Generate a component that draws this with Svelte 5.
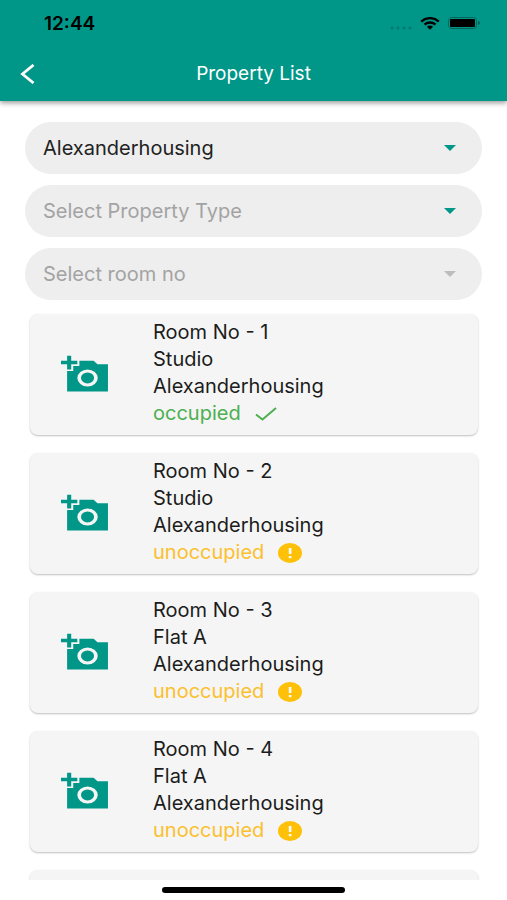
<script>
  let property = $state("Alexanderhousing");
  let propertyType = $state("");
  let roomNo = $state("");

  const rooms = [
    { no: 1, type: "Studio", property: "Alexanderhousing", occupied: true },
    { no: 2, type: "Studio", property: "Alexanderhousing", occupied: false },
    { no: 3, type: "Flat A", property: "Alexanderhousing", occupied: false },
    { no: 4, type: "Flat A", property: "Alexanderhousing", occupied: false },
  ];
</script>

{#snippet arrow()}
  <svg class="arrow" viewBox="0 0 12 6" aria-hidden="true"><path d="M0 0h12L6 6z" /></svg>
{/snippet}

<div class="screen">
  <header>
    <div class="status-bar">
      <span class="time">12:44</span>
      <div class="indicators">
        <svg class="signal" viewBox="0 0 22 4" aria-hidden="true">
          <circle cx="2" cy="2" r="1.5" />
          <circle cx="8" cy="2" r="1.5" />
          <circle cx="14" cy="2" r="1.5" />
          <circle cx="20" cy="2" r="1.5" />
        </svg>
        <svg class="wifi" viewBox="0 0 20 13" aria-hidden="true">
          <path d="M1.2 4.6a13 13 0 0 1 17.6 0M4.5 7.6a8.4 8.4 0 0 1 11 0" />
          <path class="dot" d="M10 12.8 6.9 9.8a4.8 4.8 0 0 1 6.2 0z" />
        </svg>
        <svg class="battery" viewBox="0 0 33 12" aria-hidden="true">
          <rect class="shell" x="0.5" y="0.5" width="28" height="11" rx="3" />
          <rect x="2" y="2" width="25" height="8" rx="1" />
          <path class="cap" d="M30 4c2.6 0.8 2.6 3.2 0 4z" />
        </svg>
      </div>
    </div>
    <div class="app-bar">
      <button class="back" aria-label="Back">
        <svg viewBox="0 0 14 20" aria-hidden="true"><path d="M13 1 2 10l11 9" /></svg>
      </button>
      <h1>Property List</h1>
    </div>
  </header>

  <main>
    <form class="filters">
      <div class="field">
        <select aria-label="Property" bind:value={property}>
          <option value="Alexanderhousing">Alexanderhousing</option>
        </select>
        {@render arrow()}
      </div>
      <div class="field">
        <select class:empty={!propertyType} aria-label="Property type" bind:value={propertyType}>
          <option value="">Select Property Type</option>
          <option value="Studio">Studio</option>
          <option value="Flat A">Flat A</option>
        </select>
        {@render arrow()}
      </div>
      <div class="field disabled">
        <select class:empty={!roomNo} aria-label="Room number" bind:value={roomNo} disabled>
          <option value="">Select room no</option>
        </select>
        {@render arrow()}
      </div>
    </form>

    <ul class="rooms">
      {#each rooms as room (room.no)}
        <li class="card">
          <button class="photo" aria-label="Add photo of room {room.no}">
            <svg viewBox="0 0 24 24" preserveAspectRatio="none" aria-hidden="true">
              <path
                fill-rule="evenodd"
                d="M3 4V1h2v3h3v2H5v3H3V6H0V4h3zm3 6V7h3V4h7l1.83 2H23v16H3V10h3zm7 9a5 5 0 1 0 0-10 5 5 0 0 0 0 10zm0-1.8a3.2 3.2 0 1 1 0-6.4 3.2 3.2 0 0 1 0 6.4z"
              />
            </svg>
          </button>
          <div class="info">
            <span>Room No - {room.no}</span>
            <span>{room.type}</span>
            <span>{room.property}</span>
            {#if room.occupied}
              <span class="state occupied">
                occupied
                <svg class="check" viewBox="0 0 22 14" aria-hidden="true"><path d="M1 7.5 7.5 12.5 21 1" /></svg>
              </span>
            {:else}
              <span class="state unoccupied">
                unoccupied
                <svg class="warn" viewBox="0 0 24 20" aria-hidden="true">
                  <ellipse cx="12" cy="10" rx="12" ry="10" />
                  <path d="M10.8 5h2.6v6h-2.6zM10.8 13h2.6v2.2h-2.6z" />
                </svg>
              </span>
            {/if}
          </div>
        </li>
      {/each}
      <!-- placeholder until the next page of rooms is loaded -->
      <li class="card loading" aria-hidden="true"></li>
    </ul>
  </main>

  <footer><div class="home-bar"></div></footer>
</div>

<style>
  :global(body) {
    margin: 0;
    background: #fff;
  }
  .screen {
    height: 100vh;
    display: flex;
    flex-direction: column;
    overflow: hidden;
    font-family: Inter, "Open Sans", sans-serif;
    font-size: 20px;
    color: #1c1c1c;
  }
  header {
    flex: none;
    background: #009688;
    box-shadow: 0 2px 5px rgba(0, 0, 0, 0.4);
    z-index: 1;
  }
  .status-bar {
    height: 46px;
    padding: 0 26px 0 44px;
    display: flex;
    align-items: center;
    justify-content: space-between;
    color: #000;
  }
  .time {
    font-size: 19px;
    font-weight: 600;
  }
  .indicators {
    display: flex;
    align-items: center;
    gap: 8px;
  }
  .signal {
    width: 22px;
    height: 4px;
    align-self: flex-end;
    fill: #007a6e;
  }
  .wifi {
    width: 20px;
    height: 13px;
    fill: none;
    stroke: #000;
    stroke-width: 2.4;
  }
  .wifi .dot {
    fill: #000;
    stroke: none;
  }
  .battery {
    width: 33px;
    height: 12px;
  }
  .shell {
    fill: none;
    stroke: #00665c;
  }
  .cap {
    fill: #00665c;
  }
  .app-bar {
    height: 55px;
    padding: 0 20px;
    display: grid;
    grid-template-columns: 40px 1fr 40px;
    align-items: center;
  }
  button {
    padding: 0;
    border: none;
    background: none;
    cursor: pointer;
  }
  .back {
    display: flex;
  }
  .back svg {
    width: 15px;
    height: 20px;
    fill: none;
    stroke: #fff;
    stroke-width: 2.8;
  }
  h1 {
    margin: 0;
    color: #fff;
    font-size: 19px;
    font-weight: 400;
    text-align: center;
  }
  main {
    flex: 1;
    min-height: 0;
    overflow: hidden;
    padding: 21px 25px 0;
  }
  .filters {
    display: flex;
    flex-direction: column;
    gap: 11px;
  }
  .field {
    display: grid;
    align-items: center;
  }
  .field > :global(*) {
    grid-area: 1 / 1;
  }
  select {
    width: 100%;
    height: 52px;
    padding: 0 48px 0 18px;
    border: none;
    border-radius: 26px;
    appearance: none;
    background: #eee;
    color: #222;
    font: inherit;
    opacity: 1;
  }
  select.empty {
    color: #a3a3a3;
  }
  .arrow {
    width: 12px;
    height: 6px;
    margin-right: 26px;
    justify-self: end;
    fill: #009688;
    pointer-events: none;
  }
  .disabled .arrow {
    fill: #bdbdbd;
  }
  .rooms {
    list-style: none;
    margin: 14px 4px 0 5px;
    padding: 0;
    display: flex;
    flex-direction: column;
    gap: 18px;
  }
  .card {
    display: grid;
    grid-template-columns: 123px 1fr;
    padding: 5px 0 8px;
    border-radius: 8px;
    background: #f5f5f5;
    box-shadow: 0 1px 2px rgba(0, 0, 0, 0.25);
  }
  .loading {
    min-height: 108px;
  }
  .photo {
    display: flex;
    align-items: center;
    padding: 2px 0 0 31px;
  }
  .photo svg {
    width: 49px;
    height: 41px;
    fill: #009688;
  }
  .info {
    display: flex;
    flex-direction: column;
    line-height: 27px;
  }
  .state {
    display: flex;
    align-items: center;
    gap: 14px;
  }
  .occupied {
    color: #4caf50;
  }
  .unoccupied {
    color: #fbc02d;
  }
  .check {
    width: 22px;
    height: 14px;
    fill: none;
    stroke: #4caf50;
    stroke-width: 2;
  }
  .warn {
    width: 24px;
    height: 20px;
    fill: #ffc107;
  }
  .warn path {
    fill: #fff;
  }
  footer {
    flex: none;
    height: 20px;
    display: flex;
    align-items: center;
    justify-content: center;
    background: #fff;
  }
  .home-bar {
    width: 36%;
    height: 6px;
    border-radius: 3px;
    background: #000;
  }
</style>
